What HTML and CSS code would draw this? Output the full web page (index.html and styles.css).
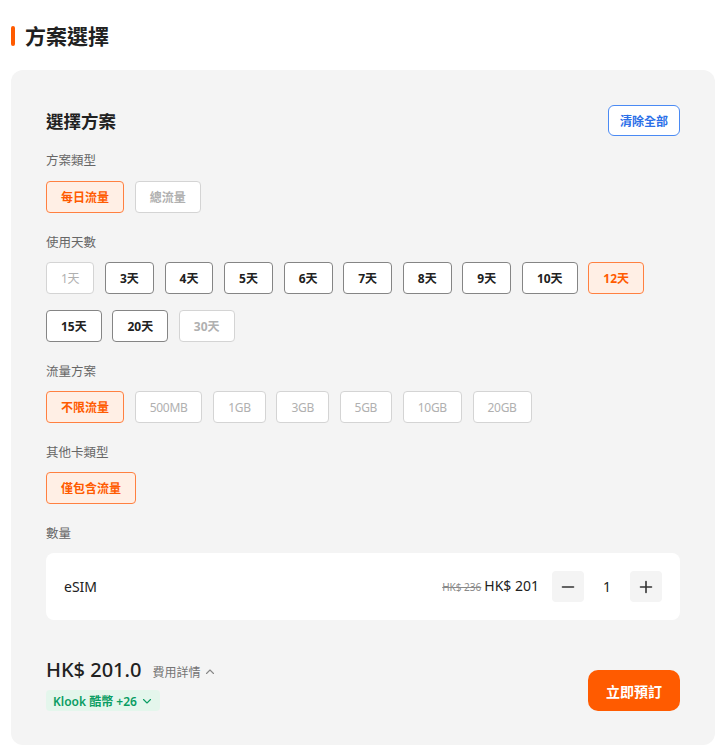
FILE: index.html
```html
<!DOCTYPE html>
<html lang="zh-Hant">
<head>
<meta charset="utf-8">
<title>方案選擇</title>
<link rel="stylesheet" href="styles.css">
</head>
<body>
<div class="page">
  <div class="page-title">
    <span class="title-bar"></span>
    <h1>方案選擇</h1>
  </div>

  <div class="card">
    <div class="card-header">
      <h2>選擇方案</h2>
      <button class="clear-btn">清除全部</button>
    </div>

    <div class="section first">
      <div class="label">方案類型</div>
      <div class="options">
        <span class="opt bold selected">每日流量</span>
        <span class="opt bold disabled">總流量</span>
      </div>
    </div>

    <div class="section">
      <div class="label">使用天數</div>
      <div class="options">
        <span class="opt disabled">1天</span>
        <span class="opt bold">3天</span>
        <span class="opt bold">4天</span>
        <span class="opt bold">5天</span>
        <span class="opt bold">6天</span>
        <span class="opt bold">7天</span>
        <span class="opt bold">8天</span>
        <span class="opt bold">9天</span>
        <span class="opt bold">10天</span>
        <span class="opt bold selected">12天</span>
        <span class="opt bold">15天</span>
        <span class="opt bold">20天</span>
        <span class="opt bold disabled">30天</span>
      </div>
    </div>

    <div class="section">
      <div class="label">流量方案</div>
      <div class="options">
        <span class="opt bold selected">不限流量</span>
        <span class="opt disabled">500MB</span>
        <span class="opt disabled">1GB</span>
        <span class="opt disabled">3GB</span>
        <span class="opt disabled">5GB</span>
        <span class="opt disabled">10GB</span>
        <span class="opt disabled">20GB</span>
      </div>
    </div>

    <div class="section">
      <div class="label">其他卡類型</div>
      <div class="options">
        <span class="opt bold selected">僅包含流量</span>
      </div>
    </div>

    <div class="section">
      <div class="label">數量</div>
      <div class="qty-box">
        <span class="qty-name">eSIM</span>
        <div class="qty-right">
          <span class="old-price">HK$ 236</span>
          <span class="new-price">HK$ 201</span>
          <div class="stepper">
            <button class="step-btn" aria-label="減少">
              <svg width="14" height="14" viewBox="0 0 14 14"><path d="M1.5 7h11" stroke="#333" stroke-width="1.6" stroke-linecap="round"/></svg>
            </button>
            <span class="qty-num">1</span>
            <button class="step-btn" aria-label="增加">
              <svg width="14" height="14" viewBox="0 0 14 14"><path d="M1.5 7h11M7 1.5v11" stroke="#333" stroke-width="1.6" stroke-linecap="round"/></svg>
            </button>
          </div>
        </div>
      </div>
    </div>

    <div class="footer">
      <div class="total-col">
        <div class="total-line">
          <span class="total">HK$ 201.0</span>
          <span class="detail">費用詳情
            <svg width="10" height="10" viewBox="0 0 10 10"><path d="M1.5 6.5L5 3l3.5 3.5" fill="none" stroke="#888" stroke-width="1.1" stroke-linecap="round" stroke-linejoin="round"/></svg>
          </span>
        </div>
        <span class="badge">Klook 酷幣 +26
          <svg width="10" height="10" viewBox="0 0 10 10"><path d="M1.5 3.5L5 7l3.5-3.5" fill="none" stroke="#0a9d63" stroke-width="1.1" stroke-linecap="round" stroke-linejoin="round"/></svg>
        </span>
      </div>
      <button class="book-btn">立即預訂</button>
    </div>
  </div>
</div>
</body>
</html>
```

FILE: styles.css
```css
* { box-sizing: border-box; }

body {
  margin: 0;
  background: #ffffff;
  font-family: "Noto Sans", "Noto Sans CJK TC", sans-serif;
  color: #212121;
}

.page {
  padding: 25px 4px 0 11px;
}

.page-title {
  display: flex;
  align-items: center;
  gap: 10px;
  height: 22px;
}

.title-bar {
  width: 4px;
  height: 20px;
  background: #ff5b00;
  border-radius: 2px;
}

.page-title h1 {
  margin: 0;
  font-size: 21px;
  line-height: 22px;
  font-weight: 700;
  color: #212121;
}

.card {
  margin-top: 23px;
  background: #f4f4f4;
  border-radius: 12px;
  padding: 35px 35px 34px;
}

.card-header {
  display: flex;
  justify-content: space-between;
  align-items: center;
  height: 31px;
}

.card-header h2 {
  margin: 0;
  font-size: 17.5px;
  line-height: 24px;
  font-weight: 700;
  color: #212121;
}

.clear-btn {
  width: 72px;
  height: 31px;
  padding: 0;
  border: 1px solid #4a8af4;
  border-radius: 6px;
  background: #ffffff;
  color: #2b6fe8;
  font-family: inherit;
  font-size: 12px;
  font-weight: 700;
}

.section {
  margin-top: 21px;
}

.section.first {
  margin-top: 16px;
}

.label {
  font-size: 12.5px;
  line-height: 18px;
  color: #666666;
  margin-bottom: 10px;
}

.section.first .label {
  margin-bottom: 11px;
}

.options {
  display: flex;
  flex-wrap: wrap;
  column-gap: 10.7px;
  row-gap: 16px;
}

.opt {
  display: inline-flex;
  align-items: center;
  justify-content: center;
  height: 32px;
  padding: 0 14px;
  border: 1px solid #858585;
  border-radius: 4px;
  background: #ffffff;
  font-size: 12px;
  letter-spacing: -0.3px;
  color: #212121;
  white-space: nowrap;
}

.opt.bold {
  font-weight: 700;
  letter-spacing: 0;
}

.opt.disabled {
  border-color: #d4d4d4;
  color: #b0b0b0;
}

.opt.selected {
  border-color: #ff8040;
  background: #ffefe5;
  color: #ff5b00;
}

.qty-box {
  display: flex;
  justify-content: space-between;
  align-items: center;
  height: 67px;
  padding: 0 18px;
  background: #ffffff;
  border-radius: 8px;
}

.qty-name {
  font-size: 14px;
  color: #212121;
}

.qty-right {
  display: flex;
  align-items: center;
}

.old-price {
  font-size: 10px;
  color: #8a8a8a;
  text-decoration: line-through;
  margin-right: 3px;
  margin-top: 1px;
}

.new-price {
  font-size: 14px;
  color: #212121;
  margin-top: -2px;
}

.stepper {
  display: flex;
  align-items: center;
  margin-left: 13px;
}

.step-btn {
  display: flex;
  align-items: center;
  justify-content: center;
  width: 32px;
  height: 31px;
  padding: 0;
  border: none;
  border-radius: 4px;
  background: #f4f4f4;
}

.qty-num {
  width: 46px;
  text-align: center;
  font-size: 14px;
  color: #212121;
}

.footer {
  margin-top: 36px;
  display: flex;
  justify-content: space-between;
  align-items: flex-end;
}

.total-col {
  display: flex;
  flex-direction: column;
  align-items: flex-start;
}

.total-line {
  display: flex;
  align-items: baseline;
  height: 28px;
}

.total {
  font-size: 20px;
  line-height: 28px;
  font-weight: 500;
  color: #212121;
}

.detail {
  margin-left: 11px;
  font-size: 12px;
  color: #757575;
}

.detail svg {
  margin-left: 1px;
}

.badge {
  margin-top: 6px;
  display: inline-flex;
  align-items: center;
  gap: 5px;
  height: 21px;
  padding: 0 8px 0 7px;
  border-radius: 4px;
  background: #e4f6ec;
  color: #0a9d63;
  font-size: 12px;
  font-weight: 600;
}

.book-btn {
  width: 92px;
  height: 41px;
  padding: 0;
  border: none;
  border-radius: 10px;
  background: #ff5b00;
  color: #ffffff;
  font-family: inherit;
  font-size: 14px;
  font-weight: 700;
}
```
